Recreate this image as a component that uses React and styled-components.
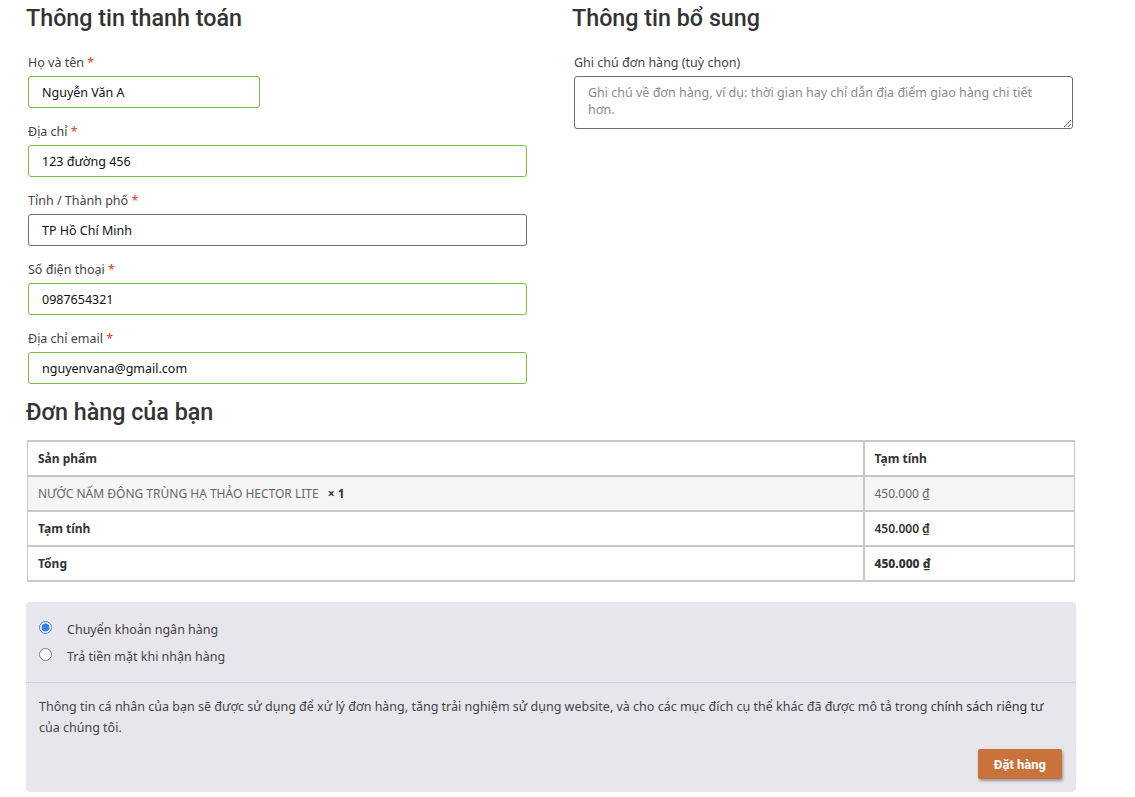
import React from "react"
import styled, { createGlobalStyle } from "styled-components"

const body = `"Noto Sans", "Open Sans", sans-serif`
const heading = `Roboto, "Noto Sans", sans-serif`

const GlobalStyle = createGlobalStyle`
  html, body {
    margin: 0;
    padding: 0;
    background: #fff;
  }
  body {
    font-family: ${body};
    color: #444;
  }
  * {
    box-sizing: border-box;
  }
`

const Page = styled.div`
  width: 1135px;
  padding: 4px 0 0 26px;
`
const Columns = styled.div`
  display: grid;
  grid-template-columns: 546px 546px;
`
const Heading = styled.h3`
  margin: 0;
  font-family: ${heading};
  font-size: 23.3px;
  font-weight: 500;
  line-height: 29px;
  color: #333;
`
const Fields = styled.div`
  display: flex;
  flex-direction: column;
  gap: 13px;
  padding: 19px 0 0 2px;
`
const Field = styled.div`
  display: flex;
  flex-direction: column;
  gap: 3px;
`
const Label = styled.label`
  font-size: 12.5px;
  line-height: 21px;
  color: #444;
`
const Required = styled.span`
  color: #e2401c;
`
const Input = styled.input`
  width: ${(p) => p.$width || "499px"};
  height: 32px;
  padding: 0 13px;
  border: 1px solid ${(p) => (p.$valid ? "#7ac142" : "#6f6f6f")};
  border-radius: 3px;
  font-family: ${body};
  font-size: 12.5px;
  color: #111;
  background: #fff;
  outline: none;
`
const TextArea = styled.textarea`
  width: 499px;
  height: 53px;
  padding: 7px 13px;
  border: 1px solid #6f6f6f;
  border-radius: 3px;
  font-family: ${body};
  font-size: 12.5px;
  line-height: 17px;
  color: #111;
  outline: none;
  &::placeholder {
    color: #8a8a8a;
  }
`
const OrderHeading = styled(Heading)`
  margin-top: 14px;
`
const Table = styled.table`
  width: 1048px;
  margin: 13px 0 0 1px;
  border-collapse: collapse;
  border: 1px solid #c8c8c8;
  font-size: 12px;
`
const Cell = styled.td`
  height: 35px;
  padding: 0 10px;
  border: 2px solid #c8c8c8;
  border-left-width: ${(p) => (p.$first ? "1px" : "2px")};
  border-right-width: ${(p) => (p.$last ? "1px" : "2px")};
  width: ${(p) => (p.$last ? "211px" : "auto")};
  font-weight: ${(p) => p.$weight || 400};
  color: ${(p) => (p.$muted ? "#666" : "#333")};
  background: ${(p) => (p.$shade ? "#f5f5f5" : "#fff")};
`
const Qty = styled.strong`
  margin-left: 6px;
  color: #333;
`
const Payment = styled.div`
  width: 1050px;
  margin-top: 20px;
  background: #e8e6ed;
  border-radius: 4px;
  font-size: 12.5px;
`
const Methods = styled.ul`
  list-style: none;
  margin: 0;
  padding: 18px 13px 15px;
  border-bottom: 1px solid #d3cfdc;
  display: flex;
  flex-direction: column;
  gap: 7px;
`
const Method = styled.li`
  display: flex;
  align-items: center;
  gap: 15px;
  line-height: 20px;
  color: #444;
`
const Radio = styled.input`
  margin: -6px 0 0 0;
  width: 13px;
  height: 13px;
  accent-color: #3c7fed;
`
const Terms = styled.div`
  padding: 13px 13px 13px;
  display: flex;
  flex-direction: column;
`
const Privacy = styled.p`
  margin: 0;
  line-height: 21px;
  color: #444;
`
const PolicyLink = styled.a`
  color: #333;
  text-decoration: none;
`
const Actions = styled.div`
  display: flex;
  justify-content: flex-end;
  padding: 11px 1px 0 0;
`
const Button = styled.button`
  height: 30px;
  padding: 0 16px;
  border: none;
  border-radius: 2px;
  background: #c9733a;
  color: #fff;
  font-family: ${heading};
  font-size: 13px;
  font-weight: 700;
  box-shadow: 1px 2px 3px rgba(0, 0, 0, 0.35);
`

const billing = [
  { label: "Họ và tên", value: "Nguyễn Văn A", valid: true, width: "232px" },
  { label: "Địa chỉ", value: "123 đường 456", valid: true },
  { label: "Tỉnh / Thành phố", value: "TP Hồ Chí Minh" },
  { label: "Số điện thoại", value: "0987654321", valid: true },
  { label: "Địa chỉ email", value: "nguyenvana@gmail.com", valid: true },
]

const App = () => (
  <>
    <GlobalStyle />
    <Page>
      <Columns>
        <div>
          <Heading>Thông tin thanh toán</Heading>
          <Fields>
            {billing.map((f) => (
              <Field key={f.label}>
                <Label>
                  {f.label} <Required>*</Required>
                </Label>
                <Input
                  readOnly
                  defaultValue={f.value}
                  $valid={f.valid}
                  $width={f.width}
                />
              </Field>
            ))}
          </Fields>
        </div>
        <div>
          <Heading>Thông tin bổ sung</Heading>
          <Fields>
            <Field>
              <Label>Ghi chú đơn hàng (tuỳ chọn)</Label>
              <TextArea placeholder="Ghi chú về đơn hàng, ví dụ: thời gian hay chỉ dẫn địa điểm giao hàng chi tiết hơn." />
            </Field>
          </Fields>
        </div>
      </Columns>

      <OrderHeading>Đơn hàng của bạn</OrderHeading>
      <Table>
        <tbody>
          <tr>
            <Cell $first $weight={700}>Sản phẩm</Cell>
            <Cell $last $weight={700}>Tạm tính</Cell>
          </tr>
          <tr>
            <Cell $first $shade $muted>
              NƯỚC NẤM ĐÔNG TRÙNG HẠ THẢO HECTOR LITE <Qty>× 1</Qty>
            </Cell>
            <Cell $last $shade $muted>450.000 ₫</Cell>
          </tr>
          <tr>
            <Cell $first $weight={700}>Tạm tính</Cell>
            <Cell $last $weight={600}>450.000 ₫</Cell>
          </tr>
          <tr>
            <Cell $first $weight={700}>Tổng</Cell>
            <Cell $last $weight={800}>450.000 ₫</Cell>
          </tr>
        </tbody>
      </Table>

      <Payment>
        <Methods>
          <Method>
            <Radio type="radio" name="pay" defaultChecked />
            Chuyển khoản ngân hàng
          </Method>
          <Method>
            <Radio type="radio" name="pay" />
            Trả tiền mặt khi nhận hàng
          </Method>
        </Methods>
        <Terms>
          <Privacy>
            Thông tin cá nhân của bạn sẽ được sử dụng để xử lý đơn hàng, tăng trải
            nghiệm sử dụng website, và cho các mục đích cụ thể khác đã được mô tả
            trong <PolicyLink href="#">chính sách riêng tư</PolicyLink> của chúng tôi.
          </Privacy>
          <Actions>
            <Button type="button">Đặt hàng</Button>
          </Actions>
        </Terms>
      </Payment>
    </Page>
  </>
)

export default App
